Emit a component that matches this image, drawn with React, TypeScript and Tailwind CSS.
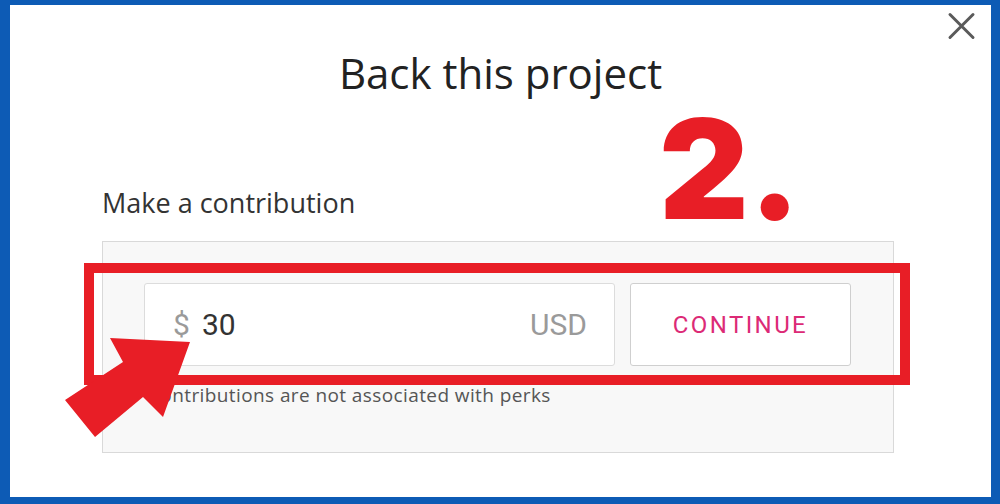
/**
 * Annotated screenshot of a "back this project" contribution dialog
 */
export default function App() {
  return (
    <div className="w-[1000px] h-[504px] bg-[#0d5bb5] pt-[5px] pl-[10px] pr-[9px] pb-[7px]">
      <div className="relative h-full w-full bg-white font-['Roboto',sans-serif] flex flex-col">
        <button className="absolute right-[15px] top-[7px] text-[#5a5a5a]">
          <svg width="29" height="28" viewBox="0 0 29 28" fill="none" stroke="currentColor" strokeWidth="3" strokeLinecap="round">
            <path d="M3 2.5 L26 25.5 M26 2.5 L3 25.5" />
          </svg>
        </button>

        <h1 className="pt-[45px] text-center font-['Open_Sans',sans-serif] text-[42px] leading-[45px] text-[#222]">
          Back this project
        </h1>

        <h2 className="mt-[92px] ml-[92px] font-['Open_Sans',sans-serif] text-[27px] leading-[32px] text-[#333]">
          Make a contribution
        </h2>

        <div className="mt-[22px] ml-[92px] w-[792px] h-[212px] border border-[#d9d9d9] bg-[#f8f8f8] px-[41px] pt-[41px]">
          <div className="flex gap-[15px]">
            <div className="flex h-[83px] w-[471px] items-center rounded-[3px] border border-[#dcdcdc] bg-white pl-[28px] pr-[27px] text-[30px]">
              <span className="text-[#9a9a9a]">$</span>
              <span className="ml-[12px] text-[#333]">30</span>
              <span className="ml-auto text-[#9a9a9a]">USD</span>
            </div>
            <button className="h-[83px] w-[221px] rounded-[3px] border border-[#cfcfcf] bg-white text-[24px] tracking-[0.1em] text-[#dc2a76]">
              CONTINUE
            </button>
          </div>
          <p className="mt-[17px] pl-[4px] font-['Open_Sans',sans-serif] text-[19px] leading-[24px] tracking-[0.4px] text-[#555]">
            Contributions are not associated with perks
          </p>
        </div>

        {/* annotations */}
        <span className="absolute left-[649px] top-[94px] font-['Inter',sans-serif] text-[139px] font-black leading-none text-[#e81e26]">
          2.
        </span>
        <div className="absolute left-[74px] top-[258px] h-[122px] w-[826px] border-[10px] border-[#e81e26]" />
        <svg className="absolute left-0 top-0" width="981" height="492" viewBox="0 0 981 492">
          <polygon
            points="55,395 113,357 100,333 180,337 153,412 133,392 85,432"
            fill="#e81e26"
          />
        </svg>
      </div>
    </div>
  )
}
